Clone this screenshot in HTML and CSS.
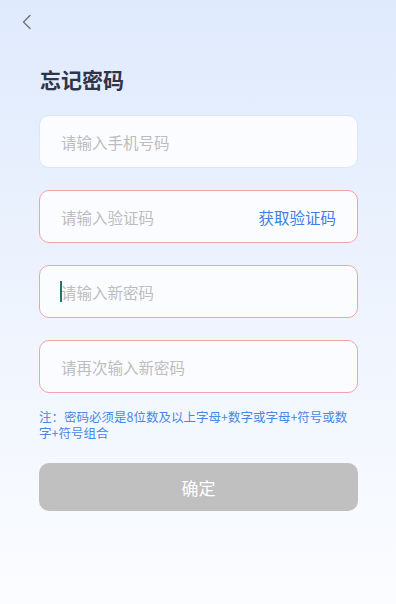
FILE: index.html
```html
<!DOCTYPE html>
<html lang="zh-CN">
<head>
    <meta charset="UTF-8">
    <meta name="viewport" content="width=device-width, initial-scale=1.0">
    <title>忘记密码</title>
    <link rel="stylesheet" href="styles.css">
</head>
<body>
    <div class="page">
        <div class="nav">
            <button class="back-btn" aria-label="返回">
                <svg width="10" height="16" viewBox="0 0 10 16" fill="none" stroke="#6b7280" stroke-width="1.4" stroke-linecap="round" stroke-linejoin="round">
                    <polyline points="8 1.5 1.5 8 8 14.5"></polyline>
                </svg>
            </button>
        </div>

        <h1 class="title">忘记密码</h1>

        <div class="form">
            <div class="field">
                <span class="placeholder">请输入手机号码</span>
            </div>
            <div class="field error">
                <span class="placeholder">请输入验证码</span>
                <span class="code-btn">获取验证码</span>
            </div>
            <div class="field error">
                <span class="caret"></span>
                <span class="placeholder">请输入新密码</span>
            </div>
            <div class="field error">
                <span class="placeholder">请再次输入新密码</span>
            </div>
        </div>

        <p class="note">注：密码必须是8位数及以上字母+数字或字母+符号或数字+符号组合</p>

        <button class="submit-btn">确定</button>
    </div>
</body>
</html>
```

FILE: styles.css
```css
html, body {
    margin: 0;
    padding: 0;
}

body {
    font-family: "Noto Sans CJK SC", "Noto Sans", sans-serif;
    background: linear-gradient(180deg, #dfeafc 0%, #eef4fe 50%, #fbfcff 100%);
    min-height: 604px;
    color: #333;
}

.page {
    padding: 0 38px 0 39px;
}

.nav {
    height: 44px;
    display: flex;
    align-items: center;
    margin-left: -19px;
}

.back-btn {
    background: none;
    border: none;
    padding: 0;
    width: 14px;
    height: 20px;
    display: flex;
    align-items: center;
    justify-content: center;
}

.title {
    margin: 21px 0 0 1px;
    font-size: 21px;
    font-weight: 700;
    line-height: 28px;
    color: #2f3448;
}

.form {
    margin-top: 22px;
    display: flex;
    flex-direction: column;
    gap: 22px;
}

.field {
    height: 51px;
    border: 1px solid #d8e5fb;
    border-radius: 10px;
    background: #fbfcff;
    display: flex;
    align-items: center;
    padding: 0 21px;
    position: relative;
}

.field.error {
    border-color: #f3a3a6;
}

.placeholder {
    font-size: 15.5px;
    color: #bdbdbd;
    flex: 1;
}

.code-btn {
    font-size: 15.5px;
    color: #3e7ee6;
}

.caret {
    position: absolute;
    left: 20px;
    top: 15px;
    width: 2px;
    height: 21px;
    background: #1a7a66;
}

.note {
    margin: 16px 0 0;
    font-size: 12.5px;
    line-height: 16px;
    color: #4a86e8;
}

.submit-btn {
    display: block;
    width: 100%;
    height: 48px;
    margin-top: 22px;
    border: none;
    border-radius: 10px;
    background: #c0c0c0;
    color: #fff;
    font-family: inherit;
    font-size: 17px;
}
```
